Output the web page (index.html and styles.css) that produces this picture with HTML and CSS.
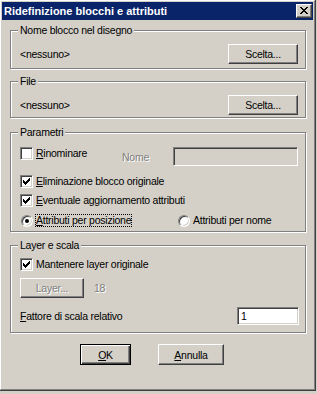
FILE: index.html
```html
<!DOCTYPE html>
<html lang="it">

<head>
	<meta charset="UTF-8">
	<title>Ridefinizione blocchi e attributi</title>
	<link rel="stylesheet" href="styles.css">
</head>

<body>
	<div class="window">
		<div class="frame">
			<div class="titlebar">
				<span class="title">Ridefinizione blocchi e attributi</span>
				<button class="close" type="button">
					<svg width="8" height="7" viewBox="0 0 8 7" shape-rendering="crispEdges">
						<path d="M0 0h2v1h-2zM6 0h2v1h-2zM1 1h2v1h-2zM5 1h2v1h-2zM2 2h4v1h-4zM3 3h2v1h-2zM2 4h4v1h-4zM1 5h2v1h-2zM5 5h2v1h-2zM0 6h2v1h-2zM6 6h2v1h-2z" fill="#000"/>
					</svg>
				</button>
			</div>

			<div class="dialog">
				<!-- block chosen in the drawing -->
				<fieldset class="group group-block">
					<legend>Nome blocco nel disegno</legend>
					<div class="pick-row">
						<span>&lt;nessuno&gt;</span>
						<button class="btn btn-pick" type="button">Scelta...</button>
					</div>
				</fieldset>

				<fieldset class="group group-file">
					<legend>File</legend>
					<div class="pick-row">
						<span>&lt;nessuno&gt;</span>
						<button class="btn btn-pick" type="button">Scelta...</button>
					</div>
				</fieldset>

				<fieldset class="group group-params">
					<legend>Parametri</legend>
					<div class="row row-rename">
						<label class="option option-rename"><span class="check"></span><span class="text"><u>R</u>inominare</span></label>
						<span class="disabled-text name-label">Nome</span>
						<span class="field field-disabled name-field"></span>
					</div>
					<div class="row row-first">
						<label class="option"><span class="check checked"></span><span class="text"><u>E</u>liminazione blocco originale</span></label>
					</div>
					<div class="row">
						<label class="option"><span class="check checked"></span><span class="text"><u>E</u>ventuale aggiornamento attributi</span></label>
					</div>
					<div class="row row-radios">
						<label class="option option-pos"><span class="radio selected"></span><span class="text focus"><u>A</u>ttributi per posizione</span></label>
						<label class="option"><span class="radio"></span><span class="text">Attributi per nome</span></label>
					</div>
				</fieldset>

				<fieldset class="group group-layer">
					<legend>Layer e scala</legend>
					<div class="row">
						<label class="option"><span class="check checked"></span><span class="text">Mantenere layer originale</span></label>
					</div>
					<div class="layer-row">
						<button class="btn btn-layer" type="button" disabled><span class="disabled-text">Layer...</span></button>
						<span class="disabled-text layer-count">18</span>
					</div>
					<div class="scale-row">
						<span><u>F</u>attore di scala relativo</span>
						<span class="field scale-field">1</span>
					</div>
				</fieldset>

				<div class="actions">
					<button class="btn btn-ok" type="button"><u>O</u>K</button>
					<button class="btn btn-cancel" type="button"><u>A</u>nnulla</button>
				</div>
			</div>
		</div>
	</div>
</body>

</html>
```

FILE: styles.css
```css
body {
	margin: 0;
	background-color: #d4d0c8;
	font-family: "Liberation Sans", Arial, sans-serif;
	font-size: 10.5px;
	letter-spacing: -0.25px;
	color: #000;
	overflow: hidden;
}

button {
	font: inherit;
	letter-spacing: inherit;
	color: inherit;
	margin: 0;
	padding: 0;
}

u {
	text-underline-offset: 1px;
}

/* window frame */
.window {
	width: 317px;
	height: 392px;
	margin: -1px 0 0 -1px;
	box-sizing: border-box;
	border: 1px solid;
	border-color: #d4d0c8 #404040 #404040 #d4d0c8;
}

.frame {
	height: 100%;
	box-sizing: border-box;
	border: 1px solid;
	border-color: #fff #808080 #808080 #fff;
	padding: 1px;
}

.titlebar {
	height: 18px;
	background-color: #0a246a;
	color: #fff;
	display: flex;
	align-items: center;
	justify-content: space-between;
	padding: 0 1px 0 2px;
}

.title {
	font-size: 11px;
	font-weight: bold;
	letter-spacing: 0;
}

.close {
	width: 16px;
	height: 14px;
	background-color: #d4d0c8;
	border: 1px solid;
	border-color: #fff #404040 #404040 #fff;
	box-shadow: inset -1px -1px #808080;
	display: flex;
	align-items: center;
	justify-content: center;
	padding: 0 0 1px 0;
}

.close svg {
	display: block;
}

/* dialog body */
.dialog {
	padding: 4px 7px 0 8px;
}

.group {
	margin: 0;
	padding: 7px 6px 0 9px;
	border: 1px solid #808080;
	box-shadow: inset 1px 1px #fff, 1px 1px #fff;
	min-width: 0;
}

.group legend {
	padding: 0 2px;
	margin-left: -2px;
	line-height: 13px;
	background-color: #d4d0c8;
}

.group-block {
	padding-bottom: 4px;
}

.group-file {
	margin-top: 6px;
	padding-bottom: 2px;
}

.group-params {
	margin-top: 8px;
	padding-bottom: 1px;
}

.group-layer {
	margin-top: 7px;
	padding-top: 3px;
	padding-bottom: 7px;
}

.pick-row {
	display: flex;
	align-items: center;
	justify-content: space-between;
	height: 20px;
}

/* buttons */
.btn {
	background-color: #d4d0c8;
	border: 1px solid;
	border-color: #fff #404040 #404040 #fff;
	box-shadow: inset -1px -1px #808080;
	height: 20px;
	box-sizing: border-box;
	text-align: center;
}

.btn-pick {
	width: 70px;
	margin-right: 1px;
}

.btn-layer {
	width: 64px;
}

.btn-ok {
	width: 51px;
	border: 1px solid #000;
	box-shadow: inset 1px 1px #fff, inset -1px -1px #404040, inset -2px -2px #808080;
}

.btn-cancel {
	width: 66px;
}

/* option rows */
.row {
	height: 19px;
	display: flex;
	align-items: center;
}

.row-rename {
	height: 20px;
	align-items: flex-start;
}

.row-first {
	margin-top: 6px;
}

.row-radios {
	margin-top: 1px;
}

.option {
	display: flex;
	align-items: center;
}

.option-rename {
	width: 102px;
	margin-top: 1px;
}

.option-pos {
	width: 157px;
}

.check {
	width: 13px;
	height: 13px;
	box-sizing: border-box;
	background-color: #fff;
	border: 1px solid;
	border-color: #808080 #fff #fff #808080;
	box-shadow: inset 1px 1px #404040, inset -1px -1px #d4d0c8;
	margin-right: 3px;
	flex-shrink: 0;
}

.check.checked {
	background-image: url("data:image/svg+xml,%3Csvg xmlns='http://www.w3.org/2000/svg' width='11' height='11' shape-rendering='crispEdges'%3E%3Cpath d='M2 4h1v3h-1zM3 5h1v3h-1zM4 6h1v3h-1zM5 5h1v3h-1zM6 4h1v3h-1zM7 3h1v3h-1zM8 2h1v3h-1z'/%3E%3C/svg%3E");
	background-repeat: no-repeat;
}

.radio {
	width: 12px;
	height: 12px;
	box-sizing: border-box;
	border-radius: 50%;
	background-color: #fff;
	border: 1px solid;
	border-color: #808080 #fff #fff #808080;
	box-shadow: inset 1px 1px #404040, inset -1px -1px #d4d0c8;
	margin: 0 3px 0 1px;
	flex-shrink: 0;
	position: relative;
}

.radio.selected::after {
	content: "";
	position: absolute;
	left: 3px;
	top: 3px;
	width: 4px;
	height: 4px;
	border-radius: 50%;
	background-color: #000;
}

.text {
	display: inline-block;
	line-height: 11px;
}

.text.focus {
	outline: 1px dotted #000;
}

.disabled-text {
	color: #808080;
	text-shadow: 1px 1px #fff;
}

.name-label {
	width: 51px;
	margin-top: 5px;
}

/* edit fields */
.field {
	box-sizing: border-box;
	border: 1px solid;
	border-color: #808080 #fff #fff #808080;
	box-shadow: inset 1px 1px #404040, inset -1px -1px #d4d0c8;
	background-color: #fff;
}

.field-disabled {
	background-color: #d4d0c8;
}

.name-field {
	width: 125px;
	height: 19px;
	margin-top: 1px;
}

.layer-row {
	display: flex;
	align-items: center;
	margin-top: 4px;
}

.layer-count {
	margin-left: 10px;
}

.scale-row {
	display: flex;
	align-items: center;
	justify-content: space-between;
	margin-top: 9px;
}

.scale-field {
	width: 62px;
	height: 18px;
	padding: 2px 0 0 3px;
	line-height: 12px;
}

.actions {
	display: flex;
	justify-content: center;
	gap: 27px;
	margin-top: 11px;
	padding-right: 12px;
}

.actions .btn {
	height: 21px;
}
```
